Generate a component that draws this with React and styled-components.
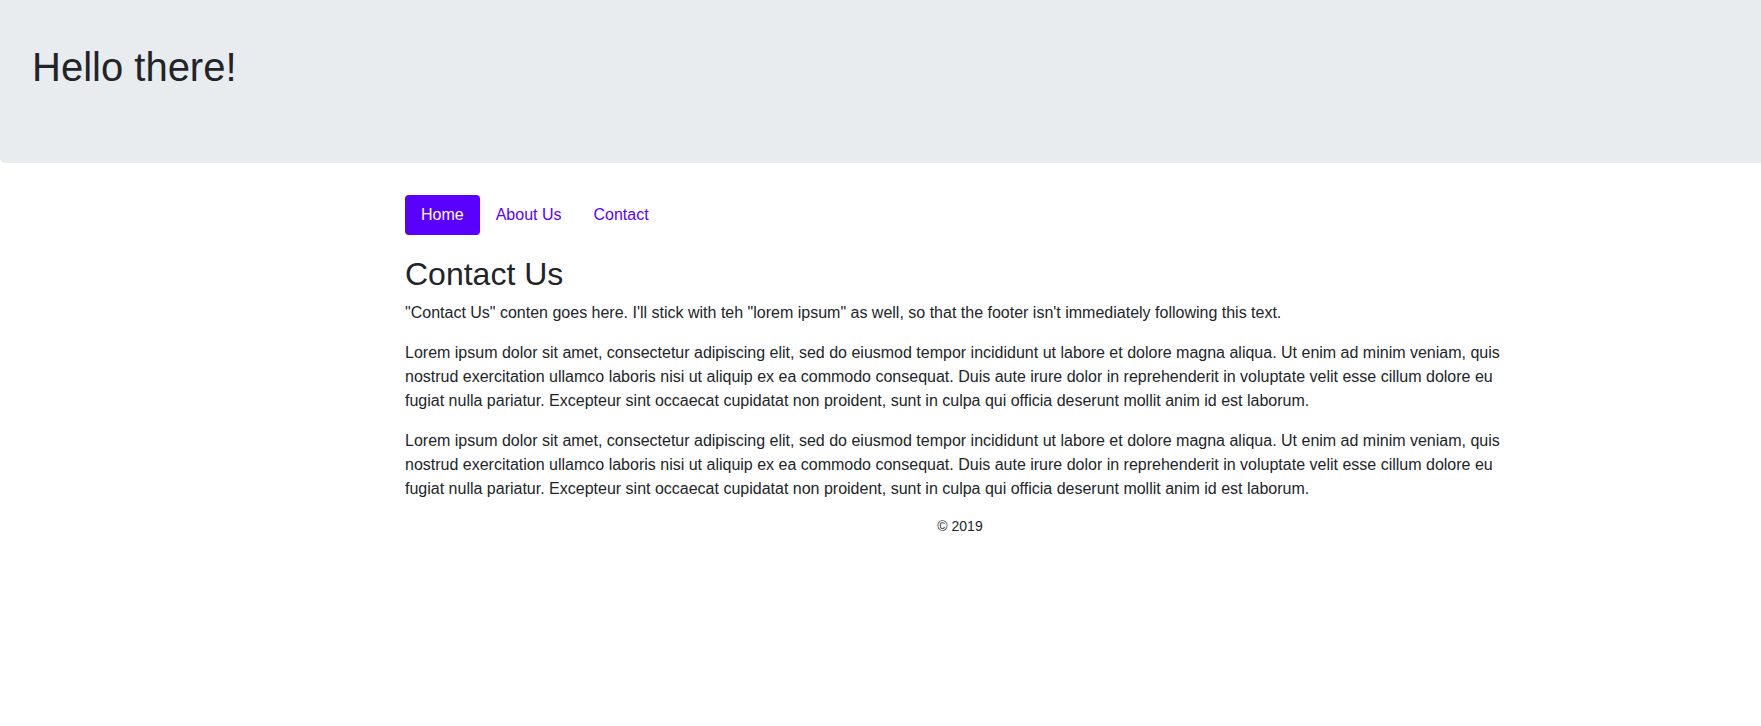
import React from "react"
import styled, { createGlobalStyle } from "styled-components"

const GlobalStyle = createGlobalStyle`
  html, body {
    margin: 0;
  }
  body {
    font-family: "Liberation Sans", Arial, sans-serif;
    font-size: 16px;
    line-height: 1.5;
    color: #212529;
    background: #fff;
  }
  * {
    box-sizing: border-box;
  }
`

const Jumbotron = styled.header`
  background-color: #e9ecef;
  padding: 43px 32px 64px;
  margin-bottom: 32px;
  border-bottom-left-radius: 4.8px;

  h1 {
    margin: 0 0 8px;
    font-size: 40px;
    font-weight: 400;
    line-height: 1.2;
  }
`

const Main = styled.div`
  padding-left: 159px;
`

const Container = styled.main`
  width: 1140px;
  margin: 0 auto;
  padding: 0 15px;
`

const Nav = styled.nav`
  display: flex;
  margin-bottom: 20px;
`

const NavLink = styled.a`
  display: block;
  padding: 8px 16px;
  border-radius: 4px;
  text-decoration: none;
  color: ${p => (p.$active ? "#fff" : "#5a00ff")};
  background: ${p => (p.$active ? "#5a00ff" : "transparent")};
`

const Title = styled.h2`
  margin: 0 0 8px;
  font-size: 32px;
  font-weight: 400;
  line-height: 1.2;
`

const Text = styled.p`
  margin: 0 0 16px;
`

const Footer = styled.footer`
  text-align: center;
  font-size: 14px;
  line-height: 21px;
  margin-top: -1px;
`

const lorem =
  "Lorem ipsum dolor sit amet, consectetur adipiscing elit, sed do eiusmod tempor incididunt ut labore et dolore magna aliqua. Ut enim ad minim veniam, quis nostrud exercitation ullamco laboris nisi ut aliquip ex ea commodo consequat. Duis aute irure dolor in reprehenderit in voluptate velit esse cillum dolore eu fugiat nulla pariatur. Excepteur sint occaecat cupidatat non proident, sunt in culpa qui officia deserunt mollit anim id est laborum."

const links = [
  { label: "Home", active: true },
  { label: "About Us" },
  { label: "Contact" },
]

export default function App() {
  return (
    <>
      <GlobalStyle />
      <Jumbotron>
        <h1>Hello there!</h1>
      </Jumbotron>
      <Main>
        <Container>
          <Nav>
            {links.map(l => (
              <NavLink key={l.label} href="#" $active={l.active}>
                {l.label}
              </NavLink>
            ))}
          </Nav>
          <Title>Contact Us</Title>
          <Text>
            "Contact Us" conten goes here. I'll stick with teh "lorem ipsum" as
            well, so that the footer isn't immediately following this text.
          </Text>
          <Text>{lorem}</Text>
          <Text>{lorem}</Text>
          <Footer>© 2019</Footer>
        </Container>
      </Main>
    </>
  )
}
